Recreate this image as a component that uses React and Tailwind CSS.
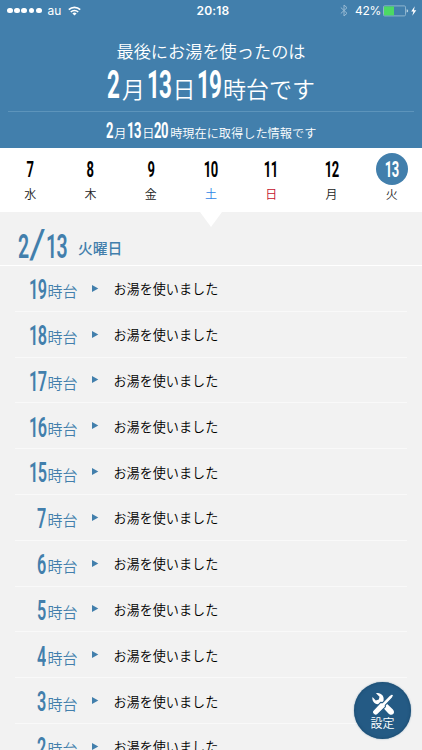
import React from 'react';
import clsx from 'clsx';

const DAYS = [
  { date: 7, label: '水', color: 'text-[#222]' },
  { date: 8, label: '木', color: 'text-[#222]' },
  { date: 9, label: '金', color: 'text-[#222]' },
  { date: 10, label: '土', color: 'text-[#2f86e6]' },
  { date: 11, label: '日', color: 'text-[#c4102c]' },
  { date: 12, label: '月', color: 'text-[#222]' },
  { date: 13, label: '火', color: 'text-[#222]', active: true },
];

const HOURS = [19, 18, 17, 16, 15, 7, 6, 5, 4, 3, 2];

// Narrow digits: the outer box sets the width, the inner text is squeezed into it
function Num({ children, className, align = 'left' }) {
  return (
    <span
      className={clsx(
        "inline-flex shrink-0 whitespace-nowrap font-['Roboto',sans-serif] leading-none tracking-[-0.035em]",
        align === 'left' && 'justify-start',
        align === 'center' && 'justify-center',
        align === 'right' && 'justify-end',
        className
      )}
    >
      <span
        className={clsx(
          'shrink-0 scale-x-[0.59]',
          align === 'left' && 'origin-left',
          align === 'center' && 'origin-center',
          align === 'right' && 'origin-right'
        )}
      >
        {children}
      </span>
    </span>
  );
}

function StatusBar() {
  return (
    <div className="grid h-[21px] grid-cols-3 items-center pl-[7px] pr-[5px] font-['Inter',sans-serif] text-[12px] leading-none">
      <div className="flex items-center">
        <div className="flex gap-[1.4px]">
          {[0, 1, 2, 3, 4].map((i) => (
            <span key={i} className="h-[5.8px] w-[5.8px] rounded-full bg-white" />
          ))}
        </div>
        <span className="ml-[6px] w-[15px] pt-px text-[12px]">au</span>
        <svg className="ml-[5px]" width="13" height="10" viewBox="0 0 13 10" fill="none" stroke="white" strokeWidth="1.6">
          <path d="M.8 3.7a8.2 8.2 0 0 1 11.4 0" />
          <path d="M2.8 6a5.3 5.3 0 0 1 7.4 0" />
          <path d="M6.5 9.6 4.4 7.5a3 3 0 0 1 4.2 0Z" fill="white" stroke="none" />
        </svg>
      </div>
      <div className="pl-[2px] pt-px text-center text-[12px] font-semibold tracking-[0.2px]">20:18</div>
      <div className="flex items-center justify-end">
        <svg className="mr-[7px]" width="8" height="13" viewBox="0 0 8 13" fill="none" stroke="#98bad2" strokeWidth="1">
          <path d="M.8 3.5 7 9.3 4 12V1l3 2.7L.8 9.5" />
        </svg>
        <span className="w-[25px] whitespace-nowrap pt-px text-[12px] tracking-[-0.3px]">42%</span>
        <svg className="ml-[3px]" width="34" height="12" viewBox="0 0 34 12">
          <rect x=".5" y=".9" width="22" height="10" rx="1.2" fill="none" stroke="#8db5cf" />
          <rect x="1" y="1.4" width="10" height="9" fill="#4cd964" />
          <path d="M23.6 4.2q1.6.3 1.6 1.7t-1.6 1.7Z" fill="#b9d1e0" />
          <path d="M31.7 1.2 28.2 6.4h2.2L29.3 10.7l4-5.5H31Z" fill="white" />
        </svg>
      </div>
    </div>
  );
}

function Header() {
  return (
    <header className="h-[148px] shrink-0 bg-[#427fac] text-white">
      <StatusBar />
      <div className="flex h-[90px] flex-col items-center pt-[17px]">
        <p className="text-[17.2px] font-[350] leading-[25px]">最後にお湯を使ったのは</p>
        <p className="flex items-baseline pt-[3px] text-[23px] font-[350] leading-[38px]">
          <Num className="w-[15px] text-[38px] font-bold">2</Num>
          <span className="w-[24.5px]">月</span>
          <Num className="w-[26px] text-[38px] font-bold">13</Num>
          <span className="w-[24px]">日</span>
          <Num className="w-[26.5px] text-[38px] font-bold">19</Num>
          <span>時台です</span>
        </p>
      </div>
      <div className="mx-2 h-px bg-[#5d94bb]" />
      <p className="flex items-baseline justify-center pt-2 text-[12.2px] font-[350] leading-[24px]">
        <Num className="w-[8.5px] text-[22px] font-bold">2</Num>
        <span className="w-[13px]">月</span>
        <Num className="w-[15px] text-[22px] font-bold">13</Num>
        <span className="w-[12px]">日</span>
        <Num className="w-[16px] text-[22px] font-bold">20</Num>
        <span>時現在に取得した情報です</span>
      </p>
    </header>
  );
}

function WeekTabs() {
  return (
    <nav className="relative grid h-16 shrink-0 grid-cols-7 bg-white">
      {DAYS.map((d) => (
        <div key={d.date} className="flex flex-col items-center pt-[5px]">
          <span
            className={clsx(
              'flex h-8 w-8 items-center justify-center rounded-full pt-px',
              d.active ? 'bg-[#427fac] text-white' : 'text-black'
            )}
          >
            <Num align="center" className="w-4 text-[22px] font-bold">{d.date}</Num>
          </span>
          <span className={clsx('text-[12px] font-[350] leading-[18px]', d.color)}>{d.label}</span>
        </div>
      ))}
      <svg className="absolute left-[200px] top-16" width="22" height="15" viewBox="0 0 22 15">
        <path d="M0 0H22L11 15Z" fill="white" />
      </svg>
    </nav>
  );
}

function DateHeading() {
  return (
    <div className="flex h-[54px] shrink-0 items-center border-b border-white pl-[18px] text-[#427fac]">
      <div className="flex items-baseline pt-[14px]">
        <Num className="w-[11px] text-[33px] font-semibold">2</Num>
        <span className="flex w-[17px] justify-center font-['Roboto',sans-serif] text-[41px] font-normal leading-[33px]">
          <span>/</span>
        </span>
        <Num className="w-[32px] text-[33px] font-semibold">13</Num>
      </div>
      <span className="pt-[18px] text-[14.8px] font-medium leading-[24px]">火曜日</span>
    </div>
  );
}

function HourRow({ hour }) {
  return (
    <li className="mx-[15px] flex h-[45.8px] shrink-0 items-center border-b border-[#f9f9f9]">
      <div className="flex w-[63px] items-center text-[#427fac]">
        <Num align="right" className="w-[31px] pt-[3px] text-[27.5px] font-semibold">{hour}</Num>
        <span className="ml-[1.5px] pt-[6px] text-[15px] font-[350] leading-[28px]">時台</span>
      </div>
      <svg className="ml-[14px]" width="7" height="7" viewBox="0 0 7 7">
        <path d="M0 0 6.3 3.5 0 7Z" fill="#427fac" />
      </svg>
      <span className="ml-[14.5px] pt-[2px] text-[13.1px] font-[350] leading-[20px] text-black">お湯を使いました</span>
    </li>
  );
}

function SettingsButton() {
  return (
    <button className="absolute left-[354px] top-[682px] flex h-[57px] w-[57px] flex-col items-center rounded-full bg-[#245a84] pt-[10px] text-white shadow-[inset_0_0_3px_#174668,0_0_2px_#8fa9bd]">
      <svg width="24" height="24" viewBox="0 0 24 24">
        {/* wrench */}
        <path
          d="M5 1.3 8.5 4.7 7.8 7.6 4.8 8.4 1.5 5.1C.7 8.7 3.1 12 6.7 12.2L8.7 11.9 17.4 21.4C18.8 23 21 23.2 22.2 22 23.5 20.7 23.2 18.6 21.7 17.2L12.5 8.6C13.7 4.4 9.8.1 5 1.3Z"
          fill="white"
        />
        {/* screwdriver shaft and handle, outlined to stand clear of the wrench */}
        <path
          d="M21 1.8 22.7 3.4 20.9 6.5 14.3 13.2 14.4 14.9 6.7 22.4C5.5 23.6 3.7 23.4 2.5 22.2 1.3 21 1.2 19.2 2.4 18L9.7 10.4 11.5 10.6 18.1 3.8Z"
          fill="white"
          stroke="#245a84"
          strokeWidth="1.1"
        />
      </svg>
      <span className="text-[12px] font-[350] leading-[14px]">設定</span>
    </button>
  );
}

export default function App() {
  return (
    <div className="relative flex h-[750px] w-[422px] flex-col overflow-hidden bg-[#f2f2f2] font-['Noto_Sans_CJK_JP',sans-serif]">
      <Header />
      <WeekTabs />
      <DateHeading />
      <ul className="flex min-h-0 flex-1 flex-col overflow-hidden">
        {HOURS.map((h) => (
          <HourRow key={h} hour={h} />
        ))}
      </ul>
      <SettingsButton />
    </div>
  );
}
